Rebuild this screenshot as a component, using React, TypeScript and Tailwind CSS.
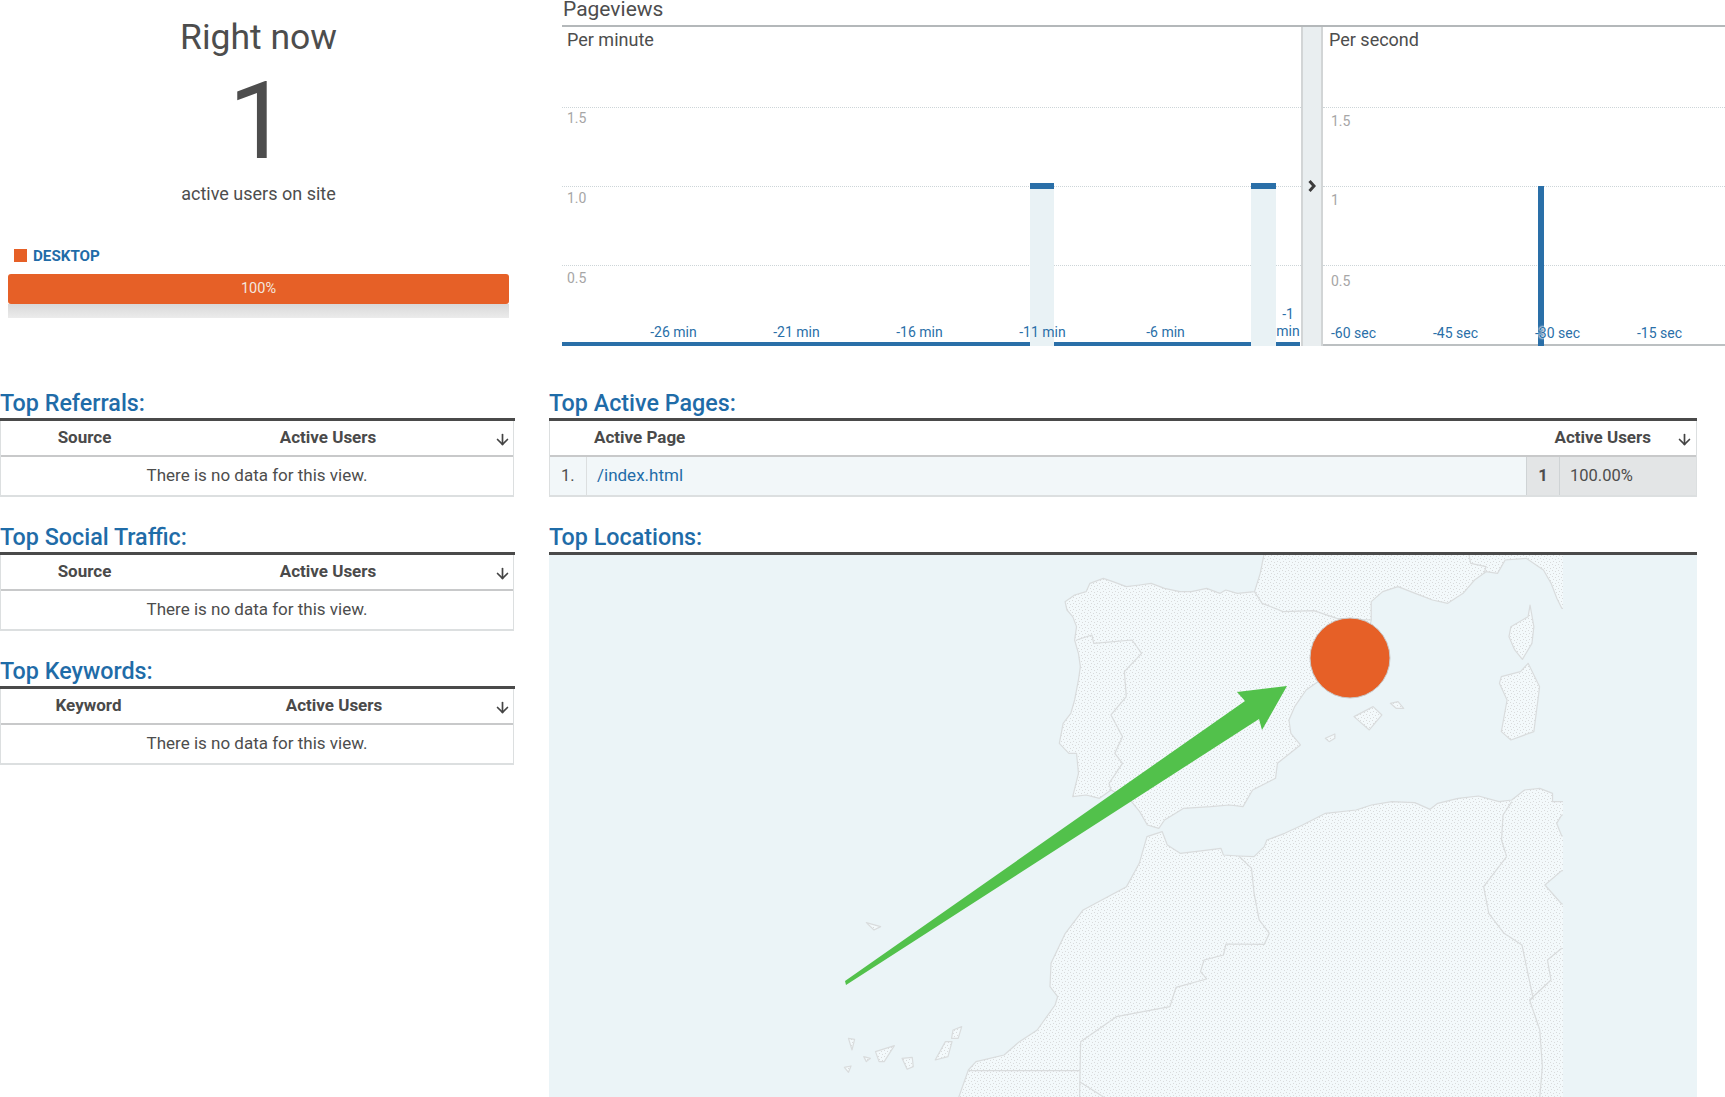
import { ArrowDown } from "lucide-react"

const font = { fontFamily: "Roboto, sans-serif" }

function SectionTitle({ title }: { title: string }) {
    return (
        <div className="pt-[7px] h-[40px] border-b-[3px] border-[#4a4a4a] text-[23.3px] leading-[30px] font-medium text-[#1f6ca8] whitespace-nowrap">
            {title}
        </div>
    )
}

function SortArrow({ cls }: { cls: string }) {
    return (
        <div className={`${cls} flex justify-end`}>
            <ArrowDown size={17} strokeWidth={2.4} className="text-[#444] mt-[2px]" />
        </div>
    )
}

// table used on the left column
function EmptyTable({ title, first, firstCls, usersCls }: { title: string; first: string; firstCls: string; usersCls: string }) {
    return (
        <section className="mb-[18px]">
            <SectionTitle title={title} />
            <div className="w-[514px] h-[76px] border-x border-b-2 border-[#dcdfe0]">
                <div className="h-[36px] border-b-2 border-[#c8c9ca] text-[17px] font-bold text-[#4a4a4a] flex items-center text-center">
                    <span className={firstCls}>{first}</span>
                    <span className={usersCls}>{"Active Users"}</span>
                    <SortArrow cls="flex-1 pr-[2px]" />
                </div>
                <div className="h-[38px] flex items-center justify-center text-[17px] text-[#4d4d4d]">There is no data for this view.</div>
            </div>
        </section>
    )
}

function GridRow({ label, cls }: { label: string; cls: string }) {
    return (
        <div className={`${cls} border-t border-dotted border-[#cdd5d8] text-[14px] leading-[16px] text-[#a6a6a6]`}>{label}</div>
    )
}

function Chart() {
    return (
        <div className="ml-[13px] h-[346px] flex flex-col text-[#4d4d4d]">
            <div className="h-[27px] border-b-2 border-[#b4b8ba] text-[21px] leading-[19px] pl-[1px]">Pageviews</div>
            <div className="flex-1 flex min-h-0">
                {/* per minute */}
                <div className="relative w-[739px]">
                    <div className="h-[80px] pl-[5px] pt-[2px] text-[18px] leading-[22px]">Per minute</div>
                    <GridRow label="1.5" cls="h-[79px] pl-[5px] pt-[2px]" />
                    <GridRow label="1.0" cls="h-[79px] pl-[5px] pt-[3px]" />
                    <GridRow label="0.5" cls="pl-[5px] pt-[4px]" />

                    <div className="absolute left-[468px] w-[24px] top-[156px] bottom-0 bg-[#e9f2f5] border-t-[6px] border-[#2a6fa8]" />
                    <div className="absolute left-[689px] w-[25px] top-[156px] bottom-0 bg-[#e9f2f5] border-t-[6px] border-[#2a6fa8]" />

                    <div className="absolute left-0 bottom-0 h-[4px] w-[738px] flex">
                        <div className="w-[468px] bg-[#2a6fa8]" />
                        <div className="w-[24px]" />
                        <div className="w-[197px] bg-[#2a6fa8]" />
                        <div className="w-[25px]" />
                        <div className="w-[24px] bg-[#2a6fa8]" />
                    </div>

                    <div className="absolute left-[50px] bottom-[6px] flex items-end text-center text-[14px] leading-[16px] text-[#2a6fa8] whitespace-nowrap">
                        <span className="w-[123px]">-26 min</span>
                        <span className="w-[123px]">-21 min</span>
                        <span className="w-[123px]">-16 min</span>
                        <span className="w-[123px]">-11 min</span>
                        <span className="w-[123px]">-6 min</span>
                        <span className="w-[24px] ml-[49px] leading-[17px]">-1<br />min</span>
                    </div>
                </div>

                {/* collapse handle */}
                <div className="w-[22px] bg-[#e9eef0] border-x-2 border-[#d2d5d6] flex items-start justify-center">
                    <svg width="8" height="12" viewBox="0 0 8 12" className="mt-[153px]">
                        <path d="M1.5 1 L6 6 L1.5 11" fill="none" stroke="#3c3c3c" strokeWidth="3" />
                    </svg>
                </div>

                {/* per second */}
                <div className="relative flex-1 border-b-2 border-[#bcc0c2]">
                    <div className="h-[80px] pl-[6px] pt-[2px] text-[18px] leading-[22px]">Per second</div>
                    <GridRow label="1.5" cls="h-[79px] pl-[8px] pt-[5px]" />
                    <GridRow label="1" cls="h-[79px] pl-[8px] pt-[5px]" />
                    <GridRow label="0.5" cls="pl-[8px] pt-[7px]" />
                    <div className="absolute left-[215px] w-[6px] top-[159px] -bottom-[2px] bg-[#2a6fa8]" />
                    <div className="absolute left-[8px] bottom-[3px] flex text-[14px] leading-[16px] text-[#2a6fa8] whitespace-nowrap">
                        <span className="w-[102px]">-60 sec</span>
                        <span className="w-[102px]">-45 sec</span>
                        <span className="w-[102px] [text-shadow:0_0_2px_white,0_0_2px_white,0_0_3px_white]">-30 sec</span>
                        <span className="w-[102px]">-15 sec</span>
                    </div>
                </div>
            </div>
        </div>
    )
}

function SpainMap() {
    const line = "#d9dcdd"
    const base = { stroke: line, strokeWidth: 1.2, vectorEffect: "non-scaling-stroke" as const, strokeLinejoin: "round" as const }
    const s1 = { ...base, fill: "url(#land1)" }
    const s2 = { ...base, fill: "url(#land2)" }
    const b = { ...base, fill: "none" }
    const dots = (
        <>
            <rect width="6" height="6" fill="#f3f9fb" />
            <rect x="0" y="0" width="1" height="1" fill="#d8dadb" />
            <rect x="3" y="1" width="1" height="1" fill="#d8dadb" />
            <rect x="1" y="3" width="1" height="1" fill="#d8dadb" />
            <rect x="4" y="4" width="1" height="1" fill="#d8dadb" />
        </>
    )
    return (
        <svg viewBox="549 555 1148 542" className="block w-[1148px] h-[542px] bg-[#ebf4f7]">
            <defs>
                <pattern id="land1" width="6" height="6" patternUnits="userSpaceOnUse" patternTransform="scale(2.613 3)">{dots}</pattern>
                <pattern id="land2" width="6" height="6" patternUnits="userSpaceOnUse" patternTransform="scale(1.96 3)">{dots}</pattern>
            </defs>
            {/* iberia, france, italy */}
            <g transform="translate(1000 540) scale(0.3827 0.3333)">
                <path {...s1} d="M690 0 L690 42 L680 100 L665 155 L620 160 L590 150 L575 160 L540 145 L500 155 L470 155 L430 145 L395 130 L365 135 L330 140 L295 125 L270 115 L235 130 L225 155 L195 165 L170 185 L175 210 L190 230 L200 260 L195 300 L205 340 L210 380 L205 420 L195 480 L185 520 L165 550 L155 610 L180 640 L200 640 L205 700 L190 770 L225 765 L260 775 L290 750 L340 780 L365 815 L385 855 L415 865 L430 840 L480 805 L550 800 L600 795 L635 800 L660 750 L720 715 L725 670 L785 615 L760 580 L755 540 L770 500 L800 450 L825 430 L870 400 L960 300 L970 240 L970 185 L1000 155 L1040 140 L1085 160 L1130 180 L1170 190 L1210 160 L1240 120 L1270 95 L1300 100 L1320 60 L1375 55 L1420 90 L1440 130 L1455 175 L1468 205 L1560 205 L1560 0 Z" />
                <path {...b} d="M200 300 L240 285 L245 310 L345 300 L370 340 L325 395 L330 470 L290 525 L320 590 L300 640 L320 670 L285 730 L290 750" />
                <path {...b} d="M665 155 L685 190 L740 215 L820 212 L880 235 L970 240" />
                <path {...b} d="M1225 42 L1230 70 L1270 80 L1265 100" />
                <path {...s1} d="M1385 195 L1380 230 L1335 260 L1330 290 L1345 330 L1365 358 L1390 310 L1395 260 Z" />
                <path {...s1} d="M1380 370 L1360 395 L1310 410 L1305 430 L1325 480 L1310 575 L1335 600 L1395 575 L1410 440 Z" />
                <path {...s1} d="M925 530 L975 500 L998 525 L965 570 Z" />
                <path {...s1} d="M1020 490 L1040 485 L1055 505 L1035 505 Z" />
                <path {...s1} d="M850 595 L875 582 L875 595 L860 605 Z" />
            </g>
            {/* north africa */}
            <g transform="translate(800 780) scale(0.5102 0.3333)">
                <path {...s2} d="M680 170 L710 155 L720 195 L745 220 L790 212 L825 205 L830 225 L860 228 L890 230 L910 200 L915 180 L950 160 L985 135 L1030 100 L1090 90 L1120 75 L1160 65 L1205 68 L1235 88 L1250 70 L1290 55 L1330 48 L1370 65 L1395 60 L1420 30 L1450 25 L1475 40 L1475 65 L1600 65 L1600 105 L1493 105 L1483 130 L1493 168 L1600 168 L1600 272 L1493 272 L1460 315 L1493 372 L1600 372 L1600 1000 L300 1000 L330 870 L345 845 L400 825 L430 785 L465 750 L500 675 L505 650 L490 620 L492 550 L520 460 L555 390 L640 320 L665 250 Z" />
                <path {...b} d="M860 228 L885 265 L890 340 L900 420 L920 460 L910 493 L835 492 L830 525 L792 540 L785 575 L797 597 L737 622 L725 680 L620 710 L550 785 L548 951" />
                <path {...b} d="M330 872 L548 872 M548 905 L595 951" />
                <path {...b} d="M1395 65 L1378 105 L1375 180 L1385 230 L1340 320 L1350 400 L1380 460 L1415 495 L1437 655 L1430 660 L1450 750 L1455 860 L1450 951" />
                <path {...b} d="M1493 505 L1465 540 L1472 600 L1430 660" />
                {/* islands */}
                <path {...s2} d="M95 775 L107 778 L102 810 Z" />
                <path {...s2} d="M148 815 L185 797 L165 845 L155 845 Z" />
                <path {...s2} d="M125 830 L138 835 L130 845 Z" />
                <path {...s2} d="M200 835 L220 832 L222 860 L210 868 Z" />
                <path {...s2} d="M87 862 L100 858 L95 877 Z" />
                <path {...s2} d="M285 785 L298 785 L290 830 L265 840 Z" />
                <path {...s2} d="M300 750 L317 740 L310 775 L297 775 Z" />
                <path {...s2} d="M130 428 L158 440 L145 450 Z" />
            </g>
            {/* cut off edge of the map tiles */}
            <rect x="1563" y="555" width="134" height="542" fill="#ebf4f7" />
            {/* marker + arrow */}
            <circle cx="1350" cy="658" r="40" fill="#e66027" stroke="#c9c9c9" strokeWidth="1" />
            <path d="M1287 686 L1237 692 L1245 701 L845 981 L846 985 L1259 719 L1262 730 Z" fill="#52c14b" />
        </svg>
    )
}

export default function App() {
    return (
        <div className="w-[1725px] h-[1097px] overflow-hidden bg-white flex" style={font}>
            {/* left column */}
            <div className="w-[549px] shrink-0">
                <div className="w-[517px] pt-[16px] text-[#4d4d4d] text-center">
                    <div className="text-[35.5px] leading-[42px]">Right now</div>
                    <div className="text-[108px] leading-[80px] mt-[23px]">1</div>
                    <div className="text-[18px] leading-[22px] mt-[22px]">active users on site</div>
                </div>
                <div className="mt-[44px] ml-[14px] h-[13px] flex items-center">
                    <span className="w-[13px] h-[13px] bg-[#e66027]" />
                    <span className="ml-[6px] mt-[2px] text-[15.2px] leading-[13px] font-bold text-[#1f6ca8]">DESKTOP</span>
                </div>
                <div className="mt-[12px] ml-[8px] w-[501px]">
                    <div className="h-[30px] rounded-[3px] bg-[#e66027] text-[#f3e6df] text-[14.5px] flex items-center justify-center">100%</div>
                    <div className="h-[14px] bg-gradient-to-b from-[#d8d8d8] to-[#ececec]" />
                </div>
                <div className="mt-[63px] w-[515px]">
                    <EmptyTable title="Top Referrals:" first="Source" firstCls="w-[167px]" usersCls="w-[320px]" />
                    <EmptyTable title="Top Social Traffic:" first="Source" firstCls="w-[167px]" usersCls="w-[320px]" />
                    <EmptyTable title="Top Keywords:" first="Keyword" firstCls="w-[175px]" usersCls="w-[316px]" />
                </div>
            </div>

            {/* right column */}
            <div className="flex-1 min-w-0">
                <Chart />
                <div className="mt-[35px] w-[1148px]">
                    <section className="mb-[18px]">
                        <SectionTitle title="Top Active Pages:" />
                        <div className="h-[76px] border-x border-b-2 border-[#dcdfe0]">
                            <div className="h-[36px] border-b-2 border-[#c8c9ca] text-[17px] font-bold text-[#4a4a4a] flex items-center">
                                <span className="flex-1 pl-[44px]">Active Page</span>
                                <span>Active Users</span>
                                <SortArrow cls="w-[45px] pr-[3px]" />
                            </div>
                            <div className="flex h-[38px] text-[16.5px] leading-[38px] text-[#4d4d4d] bg-[#f2f7f9]">
                                <div className="w-[37px] border-r border-[#dcdfe0] pl-[11px]">1.</div>
                                <div className="flex-1 pl-[10px] text-[17px] leading-[37px] text-[#1f6ca8]">/index.html</div>
                                <div className="w-[33px] border-l border-[#cfd3d5] bg-[#e3e5e6] text-center font-bold">1</div>
                                <div className="w-[137px] border-l border-[#cfd3d5] bg-[#e3e5e6] pl-[10px]">100.00%</div>
                            </div>
                        </div>
                    </section>
                    <SectionTitle title="Top Locations:" />
                    <SpainMap />
                </div>
            </div>
        </div>
    )
}
